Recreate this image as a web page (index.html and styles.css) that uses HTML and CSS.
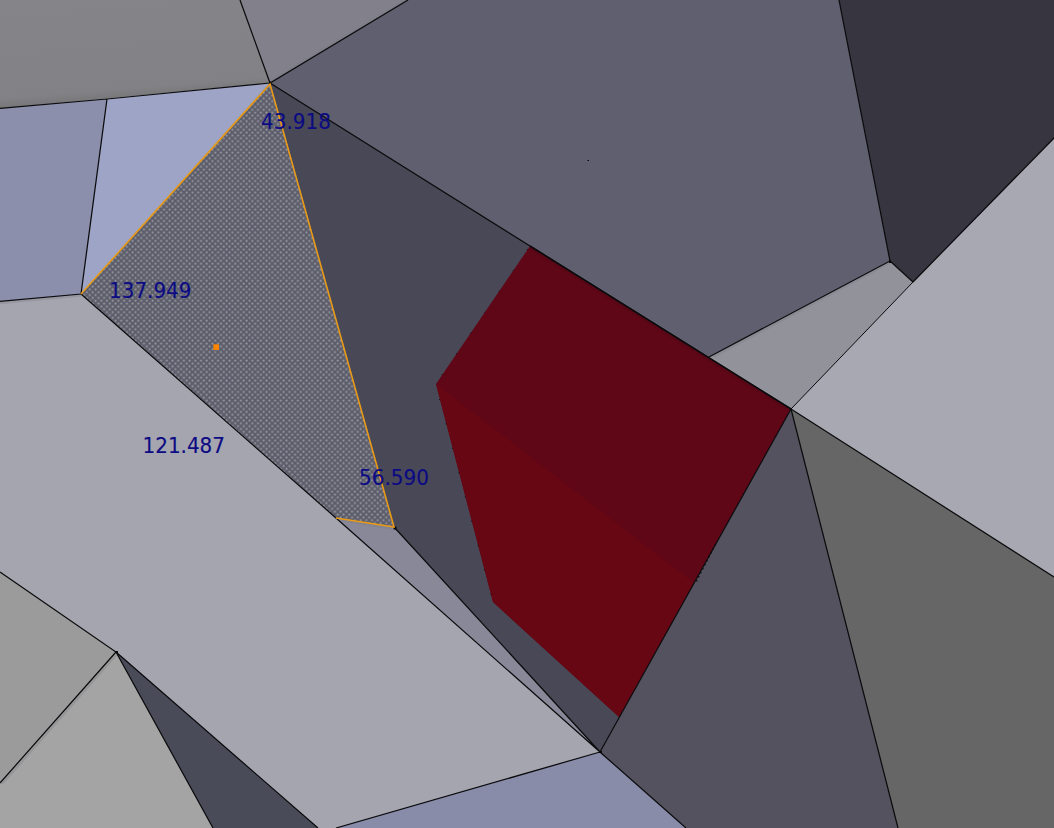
FILE: index.html
```html
<!DOCTYPE html>
<html lang="en">
<head>
<meta charset="utf-8">
<title>3D viewport</title>
<link rel="stylesheet" href="styles.css">
</head>
<body>
<svg class="viewport" width="1054" height="828" viewBox="0 0 1054 828">
  <defs>
    <pattern id="stipple" width="5.7" height="5.7" patternUnits="userSpaceOnUse">
      <rect class="dot" x="0.6" y="0.6" width="1.8" height="1.8"/>
      <rect class="dot" x="3.45" y="3.45" width="1.8" height="1.8"/>
    </pattern>
    <linearGradient id="grey-top" gradientUnits="userSpaceOnUse" x1="100" y1="0" x2="108" y2="100">
      <stop offset="0" stop-color="#858488"/>
      <stop offset=".9" stop-color="#828185"/>
      <stop offset="1" stop-color="#777779"/>
    </linearGradient>
  </defs>

  <!-- mesh faces -->
  <rect width="1054" height="828" fill="#a5a5af"/>
  <path fill="url(#grey-top)" d="M0 0H240L270 83L0 108.500Z"/>
  <path fill="#82818b" d="M240 0H408L270 83Z"/>
  <path fill="#605f6f" d="M408 0H839L890 261L709 357L709 360L530 248L270 83Z"/>
  <path fill="#373640" d="M839 0H1054V138L913 282L890 261Z"/>
  <path fill="#a8a8b2" d="M1054 138V577L791 409L913 282Z"/>
  <path fill="#92929b" d="M890 261L913 282L791 409L709 357Z"/>
  <path fill="#666666" d="M791 409L1054 577V828H898Z"/>
  <path fill="#54525f" d="M791 409L898 828H686L600 752Z"/>
  <path fill="#8b8fac" d="M0 108.500L107 99L81 294L0 301.500Z"/>
  <path fill="#9ea4c5" d="M107 99L270 83L81 294Z"/>
  <path fill="#494856" d="M270 83L530 246L791 409L600 752L394 527Z"/>
  <path fill="#898898" d="M336 518L394 527L600 752Z"/>
  <path fill="#888ca9" d="M336 828L600 752L686 828Z"/>
  <path fill="#9b9b9b" d="M0 572L116 652L0 783Z"/>
  <path fill="#a4a4a4" d="M116 652L213 828H0V783Z"/>
  <path fill="#4a4b59" d="M116 652L318 828H213Z"/>

  <!-- soft shading under edges -->
  <g class="shade">
    <path d="M0 303L81 295.500"/>
    <path d="M713 357L889 263"/>
    <path d="M2 784L116 655"/>
    <path d="M341 520L392 528.500"/>
    <path d="M272 80L404 1"/>
  </g>

  <!-- intersecting solid -->
  <path fill="#600717" d="M530 246L791 409L619 717L493 602L436 384Z"/>
  <path fill="#670713" d="M436 384L694 583L619 717L493 602Z"/>
  <path class="red-shade" d="M531 248.500L788 409.500"/>

  <!-- selected face -->
  <path fill="#5c5d6a" d="M270 83L394 527L336 518L81 294Z"/>
  <path fill="url(#stipple)" d="M270 83L394 527L336 518L81 294Z"/>

  <!-- edges -->
  <g class="edges">
    <path d="M240 0L270 83L408 0M0 108.500L107 99L270 83M107 99L81 294L0 301.500"/>
    <path d="M270 83L530 246L791 409L1054 577"/>
    <path class="heavy" d="M530 246L791 409"/>
    <path d="M839 0L890 261L709 357M890 261L913 282M1054 138L913 282"/>
    <path class="fine" d="M913 282L791 409"/>
    <path d="M791 409L898 828M791 409L600 752L686 828M600 752L336 828"/>
    <path d="M81 294L336 518L600 752M394 527L600 752"/>
    <path d="M0 572L116 652L0 783M213 828L116 652L318 828"/>
  </g>
  <path class="breaks" d="M442 375L528 249M439.500 399L492.500 600"/>
  <path class="ragged" d="M715.500 544L696 582"/>

  <!-- vertices -->
  <path class="vertex" d="M269 81.500h2v2h-2zM393.500 526.500h3v3h-3zM599 751h3v2h-3zM790 408h2v2h-2zM889 260h2v3h-2zM115 651h3v2h-3zM587.500 160h1.500v1h-1.500z"/>

  <path class="selected" d="M81 294L270 84L394 527L336 518"/>
  <rect x="213.300" y="344.300" width="5.700" height="5.700" fill="#ff8500"/>

  <!-- edge lengths -->
  <g class="measure">
    <text x="261" y="129" textLength="70" lengthAdjust="spacingAndGlyphs">43.918</text>
    <text x="109" y="298" textLength="82.500" lengthAdjust="spacingAndGlyphs">137.949</text>
    <text x="142.500" y="453" textLength="82.500" lengthAdjust="spacingAndGlyphs">121.487</text>
    <text x="359" y="485" textLength="70" lengthAdjust="spacingAndGlyphs">56.590</text>
  </g>
</svg>
</body>
</html>
```

FILE: styles.css
```css
body {
  margin: 0;
  overflow: hidden;
  background: #a5a5af;
}

.viewport {
  display: block;
}

.dot {
  fill: #9c9da5;
}

.edges {
  fill: none;
  stroke: #0b0b0d;
  stroke-width: 1.25;
}

.fine {
  stroke-width: 1;
}

.heavy {
  stroke-width: 1.5;
}

.shade {
  fill: none;
  stroke: #777681;
  stroke-opacity: 0.3;
  stroke-width: 2.5;
}

.red-shade {
  stroke: #4b0713;
  stroke-opacity: 0.4;
  stroke-width: 3;
}

.breaks {
  fill: none;
  stroke: #180b12;
  stroke-width: 1;
  stroke-dasharray: 1.2 24;
}

.ragged {
  fill: none;
  stroke: #120b10;
  stroke-width: 1.5;
  stroke-dasharray: 1.5 3;
}

.vertex {
  fill: #08080a;
}

.selected {
  fill: none;
  stroke: #e99a17;
  stroke-width: 1.6;
}

.measure {
  fill: #0c0b83;
  stroke: #0c0b83;
  stroke-width: 0.15;
  font-family: "DejaVu Sans", sans-serif;
  font-size: 20.8px;
}
```
